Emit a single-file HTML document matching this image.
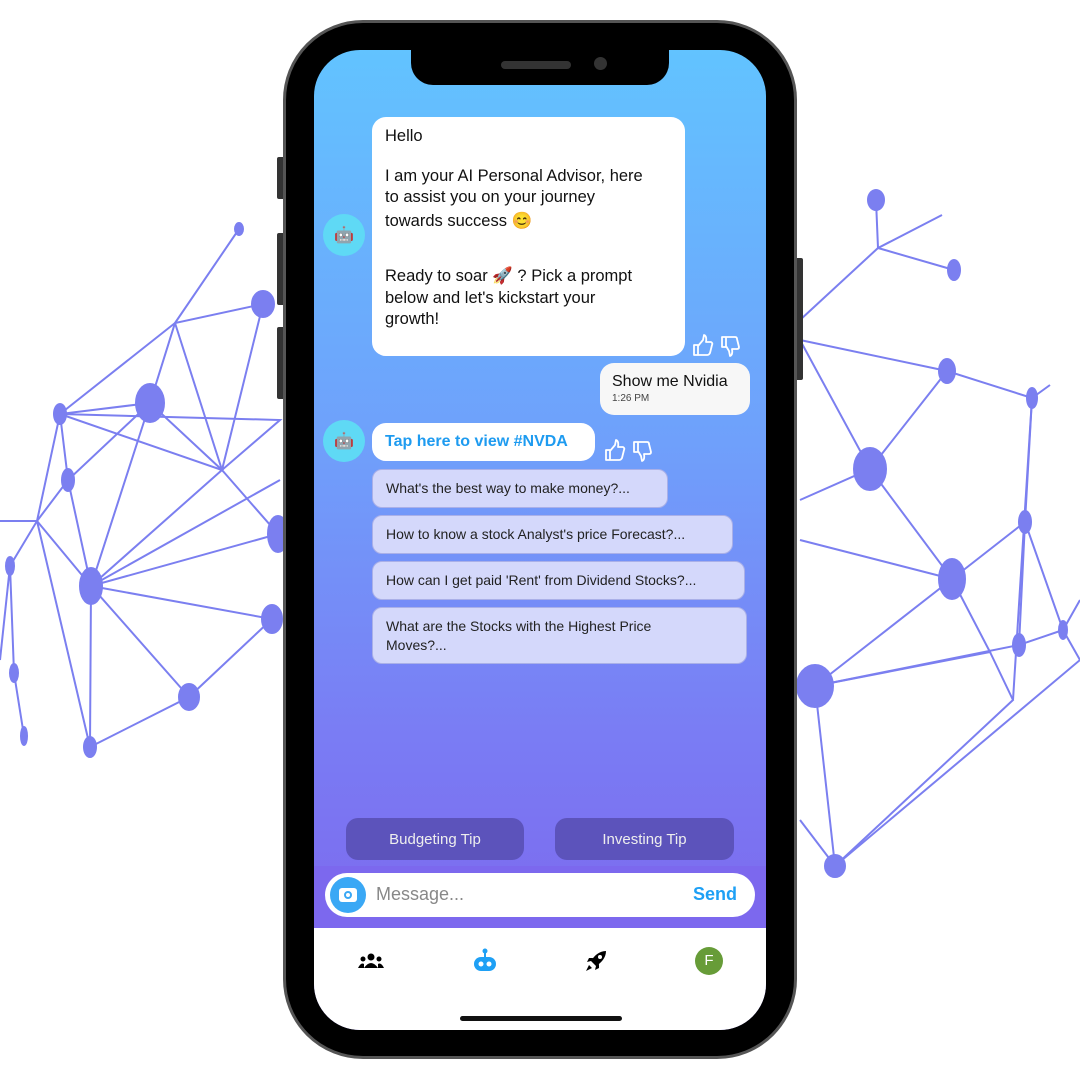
<!DOCTYPE html>
<html><head><meta charset="utf-8"><style>
*{margin:0;padding:0;box-sizing:border-box}
body{width:1080px;height:1080px;background:#fff;position:relative;overflow:hidden;font-family:"Liberation Sans","Noto Sans CJK SC",sans-serif}
.abs{position:absolute}
.phone{left:283px;top:20px;width:514px;height:1039px;border-radius:80px;background:#000;border:3px solid #555}
.screen{left:314px;top:50px;width:452px;height:980px;border-radius:46px;overflow:hidden;background:linear-gradient(#62c3ff 0%,#6fa0fb 40%,#7a7cf4 70%,#7c6cef 88%)}
.notch{left:97px;top:0;width:258px;height:35px;background:#000;border-radius:0 0 22px 22px}
.bub{background:#fff;border-radius:14px;font-size:16px;color:#111;line-height:21px}
.ln{position:absolute;left:13px;white-space:nowrap;font-size:16.5px}
.pr{background:#d4d8fb;border:1px solid #aab0e8;border-radius:10px;font-size:14px;color:#222;padding:0 13px;line-height:19px;display:flex;align-items:center}
.av{width:42px;height:42px;border-radius:50%;background:#5fd9f5;display:flex;align-items:center;justify-content:center}
.btn{background:#5c53bb;border-radius:12px;color:#eee;font-size:15px;display:flex;align-items:center;justify-content:center}
.side{background:#333;width:8px;border-radius:2px}
</style></head><body>
<svg class="abs" style="left:0;top:0" width="1080" height="1080" stroke="#7b7ff0" stroke-width="2" fill="#7b7ff0">
<g fill="none">
<polyline points="239,229 175,323 150,403 60,414 37,521 0,521"/>
<polyline points="263,304 175,323 60,414"/>
<polyline points="175,323 222,470 150,403 68,480 37,521 10,566 14,673 24,736"/>
<polyline points="222,470 278,534 91,586 37,521"/>
<polyline points="150,403 91,586 68,480 60,414 222,470 91,586 272,619 189,697 90,747 91,586 189,697"/>
<polyline points="263,304 222,470 280,420 60,414"/>
<polyline points="91,586 280,480"/><polyline points="10,566 0,660"/><polyline points="37,521 90,747"/>
<polyline points="876,200 878,248 942,215"/><polyline points="878,248 954,270"/><polyline points="878,248 800,320"/>
<polyline points="800,340 947,371 1032,398 1050,385"/><polyline points="947,371 870,469 800,500"/>
<polyline points="800,340 870,469 952,579 1025,522 1032,398"/>
<polyline points="800,540 952,579 990,652 815,686 952,579"/><polyline points="1025,522 1019,645 1063,630 1080,600"/>
<polyline points="815,686 1019,645"/><polyline points="815,686 835,866 1013,700 990,652"/><polyline points="1025,522 1063,630 1080,660"/>
<polyline points="835,866 1080,660"/><polyline points="1013,700 1032,398"/><polyline points="835,866 800,820"/>
</g>
<ellipse cx="239" cy="229" rx="4" ry="6"/><ellipse cx="263" cy="304" rx="11" ry="13"/><ellipse cx="150" cy="403" rx="14" ry="19"/><ellipse cx="60" cy="414" rx="6" ry="10"/><ellipse cx="68" cy="480" rx="6" ry="11"/><ellipse cx="91" cy="586" rx="11" ry="18"/><ellipse cx="10" cy="566" rx="4" ry="9"/><ellipse cx="278" cy="534" rx="10" ry="18"/><ellipse cx="272" cy="619" rx="10" ry="14"/><ellipse cx="189" cy="697" rx="10" ry="13"/><ellipse cx="90" cy="747" rx="6" ry="10"/><ellipse cx="14" cy="673" rx="4" ry="9"/><ellipse cx="24" cy="736" rx="3" ry="9"/>
<ellipse cx="876" cy="200" rx="8" ry="10"/><ellipse cx="954" cy="270" rx="6" ry="10"/><ellipse cx="947" cy="371" rx="8" ry="12"/><ellipse cx="1032" cy="398" rx="5" ry="10"/><ellipse cx="870" cy="469" rx="16" ry="21"/><ellipse cx="952" cy="579" rx="13" ry="20"/><ellipse cx="1025" cy="522" rx="6" ry="11"/><ellipse cx="1019" cy="645" rx="6" ry="11"/><ellipse cx="1063" cy="630" rx="4" ry="9"/><ellipse cx="815" cy="686" rx="18" ry="21"/><ellipse cx="835" cy="866" rx="10" ry="11"/>
</svg>
<div class="abs side" style="left:277px;top:157px;height:42px"></div>
<div class="abs side" style="left:277px;top:233px;height:72px"></div>
<div class="abs side" style="left:277px;top:327px;height:72px"></div>
<div class="abs side" style="left:795px;top:258px;height:122px"></div>
<div class="abs phone"></div>
<div class="abs screen">
 <div class="abs notch"><div class="abs" style="left:90px;top:11px;width:70px;height:8px;background:#333;border-radius:4px"></div><div class="abs" style="left:183px;top:7px;width:13px;height:13px;background:#333;border-radius:50%"></div></div>
 <div class="abs av" style="left:9px;top:164px">🤖</div>
 <div class="abs bub" style="left:58px;top:67px;width:313px;height:239px">
  <div class="ln" style="top:9px">Hello</div>
  <div class="ln" style="top:49px">I am your AI Personal Advisor, here</div>
  <div class="ln" style="top:70px">to assist you on your journey</div>
  <div class="ln" style="top:94px">towards success 😊</div>
  <div class="ln" style="top:149px">Ready to soar 🚀 ? Pick a prompt</div>
  <div class="ln" style="top:171px">below and let's kickstart your</div>
  <div class="ln" style="top:192px">growth!</div>
 </div>
 <svg class="abs" style="left:378px;top:284px" width="50" height="24" fill="none" stroke="#fff" stroke-width="1.8" stroke-linejoin="round"><path d="M2 11h4v10H2zM6 12l5-6 1-5q3 1 2 7h5q2 1 1 3l-2 8q-1 2-3 2H6"/><path d="M30 3h4v10h-4zM34 3h9q2 0 2 2l2 8q0 2-2 2h-5q1 6-2 7l-1-5-3-5"/></svg>
 <div class="abs bub" style="left:286px;top:313px;width:150px;height:52px;padding:8px 12px;background:#f7f7f7">Show me Nvidia<div style="font-size:10px;color:#444;line-height:14px">1:26 PM</div></div>
 <div class="abs av" style="left:9px;top:370px">🤖</div>
 <div class="abs bub" style="left:58px;top:373px;width:223px;height:38px;padding:8px 13px;color:#1e9bf0;font-weight:bold">Tap here to view #NVDA</div>
 <svg class="abs" style="left:290px;top:389px" width="50" height="24" fill="none" stroke="#fff" stroke-width="1.8" stroke-linejoin="round"><path d="M2 11h4v10H2zM6 12l5-6 1-5q3 1 2 7h5q2 1 1 3l-2 8q-1 2-3 2H6"/><path d="M30 3h4v10h-4zM34 3h9q2 0 2 2l2 8q0 2-2 2h-5q1 6-2 7l-1-5-3-5"/></svg>
 <div class="abs pr" style="left:58px;top:419px;width:296px;height:39px">What's the best way to make money?...</div>
 <div class="abs pr" style="left:58px;top:465px;width:361px;height:39px">How to know a stock Analyst's price Forecast?...</div>
 <div class="abs pr" style="left:58px;top:511px;width:373px;height:39px">How can I get paid 'Rent' from Dividend Stocks?...</div>
 <div class="abs pr" style="left:58px;top:557px;width:375px;height:57px;padding-right:40px">What are the Stocks with the Highest Price Moves?...</div>
 <div class="abs btn" style="left:32px;top:768px;width:178px;height:42px">Budgeting Tip</div>
 <div class="abs btn" style="left:241px;top:768px;width:179px;height:42px">Investing Tip</div>
 <div class="abs" style="left:0;top:816px;width:452px;height:62px;background:#7c68ee"></div>
 <div class="abs" style="left:11px;top:823px;width:430px;height:44px;background:#fff;border-radius:22px"></div>
 <div class="abs" style="left:16px;top:827px;width:36px;height:36px;border-radius:50%;background:#3aa8f5"><div class="abs" style="left:9px;top:11px;width:18px;height:14px;background:#fff;border-radius:3px"></div><div class="abs" style="left:14px;top:14px;width:8px;height:8px;border:2px solid #3aa8f5;border-radius:50%"></div></div>
 <div class="abs" style="left:62px;top:834px;font-size:18px;color:#888">Message...</div>
 <div class="abs" style="left:379px;top:834px;font-size:18px;color:#1ea0f5;font-weight:bold">Send</div>
 <div class="abs" style="left:0;top:878px;width:452px;height:102px;background:#fff"></div>
 <svg class="abs" style="left:44px;top:902px" width="26" height="18"><circle cx="13" cy="5" r="3.5"/><circle cx="5" cy="7" r="2.5"/><circle cx="21" cy="7" r="2.5"/><path d="M6 16q7-10 14 0z"/><path d="M0 16q3-6 6-4v4zM26 16q-3-6-6-4v4z"/></svg>
 <svg class="abs" style="left:158px;top:898px" width="26" height="26" fill="#1ea0f5"><circle cx="13" cy="3" r="2.5"/><rect x="12" y="4" width="2" height="5"/><rect x="2" y="9" width="22" height="14" rx="7"/><circle cx="9" cy="16" r="2.5" fill="#fff"/><circle cx="17" cy="16" r="2.5" fill="#fff"/></svg>
 <svg class="abs" style="left:270px;top:899px" width="24" height="24"><path d="M22 2C15 2 10 7 7 12l5 5c5-3 10-8 10-15zM7 12l-4 1 2-4h4zM12 17l-1 4 4-2v-4zM5 16l-3 6 6-3z"/><circle cx="16" cy="8" r="2" fill="#fff"/></svg>
 <div class="abs" style="left:381px;top:897px;width:28px;height:28px;border-radius:50%;background:#679c38;color:#fff;font-size:15px;text-align:center;line-height:28px">F</div>
 <div class="abs" style="left:146px;top:966px;width:162px;height:5px;background:#111;border-radius:3px"></div>
</div>
</body></html>
